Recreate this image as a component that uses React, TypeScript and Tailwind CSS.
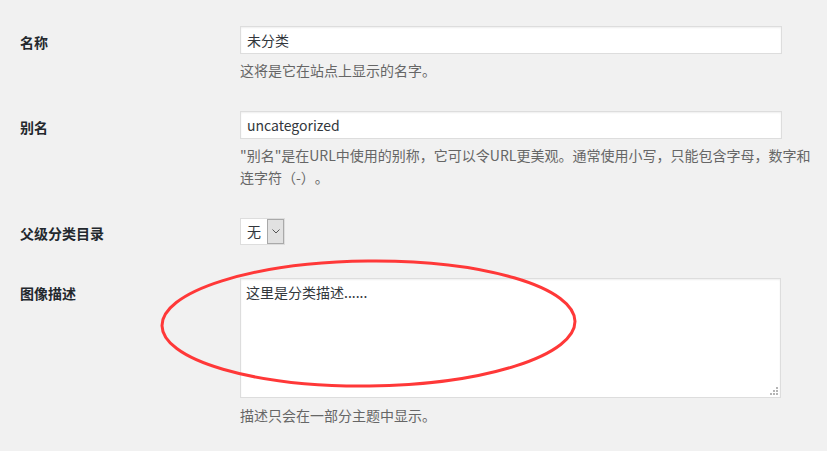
/**
 * Category edit form (WordPress-style term fields) with a hand-drawn
 * red ellipse over the description textarea.
 */
const FONT = {
  fontFamily: '"Noto Sans CJK SC", "Noto Sans", "Liberation Sans", sans-serif',
};

function Label({ text, className = "" }: { text: string; className?: string }) {
  return (
    <div
      className={`w-[240px] shrink-0 pl-5 text-[14px] leading-[22px] font-bold text-[#23282d] ${className}`}
    >
      {text}
    </div>
  );
}

function Help({ children, className = "" }: { children: React.ReactNode; className?: string }) {
  return (
    <p className={`w-[572px] text-[14px] leading-[22px] text-[#666666] ${className}`}>
      {children}
    </p>
  );
}

export default function App() {
  return (
    <div
      className="relative h-[451px] w-[827px] overflow-hidden bg-[#f1f1f1] [text-spacing-trim:space-all]"
      style={FONT}
    >
      {/* 名称 */}
      <div className="flex pt-[26px]">
        <Label text="名称" className="pt-[5px]" />
        <div>
          <input
            readOnly
            value="未分类"
            className="h-[28px] w-[542px] border border-[#dddddd] bg-white px-[6px] text-[14px] text-[#32373c] outline-none shadow-[inset_0_1px_2px_rgba(0,0,0,0.07)]"
          />
          <Help className="mt-[5px]">这将是它在站点上显示的名字。</Help>
        </div>
      </div>

      {/* 别名 */}
      <div className="flex pt-[30px]">
        <Label text="别名" className="pt-[5px]" />
        <div>
          <input
            readOnly
            value="uncategorized"
            className="h-[28px] w-[542px] border border-[#dddddd] bg-white px-[6px] text-[14px] text-[#32373c] outline-none shadow-[inset_0_1px_2px_rgba(0,0,0,0.07)]"
          />
          <Help className="mt-[5px]">
            "别名"是在URL中使用的别称，它可以令URL更美观。通常使用小写，只能包含字母，数字和连字符（-）。
          </Help>
        </div>
      </div>

      {/* 父级分类目录 */}
      <div className="flex pt-[30px]">
        <Label text="父级分类目录" className="pt-[4px]" />
        <div className="flex h-[27px] w-[45px] items-stretch border border-[#dddddd] bg-white">
          <span className="flex flex-1 items-center pl-[6px] text-[14px] text-[#32373c]">无</span>
          <span className="flex w-[17px] items-center justify-center border border-[#a9a9a9] bg-[#e1e1e1]">
            <svg width="8" height="5" viewBox="0 0 8 5" fill="none">
              <path d="M0.5 0.5 L4 4 L7.5 0.5" stroke="#555" strokeWidth="1" />
            </svg>
          </span>
        </div>
      </div>

      {/* 图像描述 */}
      <div className="flex pt-[33px]">
        <Label text="图像描述" className="pt-[4px]" />
        <div>
          <div className="relative h-[120px] w-[541px] border border-[#dddddd] bg-white px-[5px] py-[2px] text-[14px] leading-[22px] text-[#32373c] shadow-[inset_0_1px_2px_rgba(0,0,0,0.07)]">
            这里是分类描述......
            <svg
              className="absolute bottom-[2px] right-[2px]"
              width="8"
              height="8"
              viewBox="0 0 8 8"
            >
              <rect x="6" y="0" width="2" height="2" fill="#b5b5b5" />
              <rect x="3" y="3" width="2" height="2" fill="#b5b5b5" />
              <rect x="6" y="3" width="2" height="2" fill="#b5b5b5" />
              <rect x="0" y="6" width="2" height="2" fill="#b5b5b5" />
              <rect x="3" y="6" width="2" height="2" fill="#b5b5b5" />
              <rect x="6" y="6" width="2" height="2" fill="#b5b5b5" />
            </svg>
          </div>
          <Help className="mt-[6px]">描述只会在一部分主题中显示。</Help>
        </div>
      </div>

      {/* red annotation ellipse */}
      <svg
        className="pointer-events-none absolute left-0 top-0"
        width="827"
        height="451"
        viewBox="0 0 827 451"
      >
        <ellipse
          cx="368.5"
          cy="323.5"
          rx="206.5"
          ry="62.5"
          fill="none"
          stroke="#ff3838"
          strokeWidth="3"
          transform="rotate(-0.6 368.5 323.5)"
        />
      </svg>
    </div>
  );
}
